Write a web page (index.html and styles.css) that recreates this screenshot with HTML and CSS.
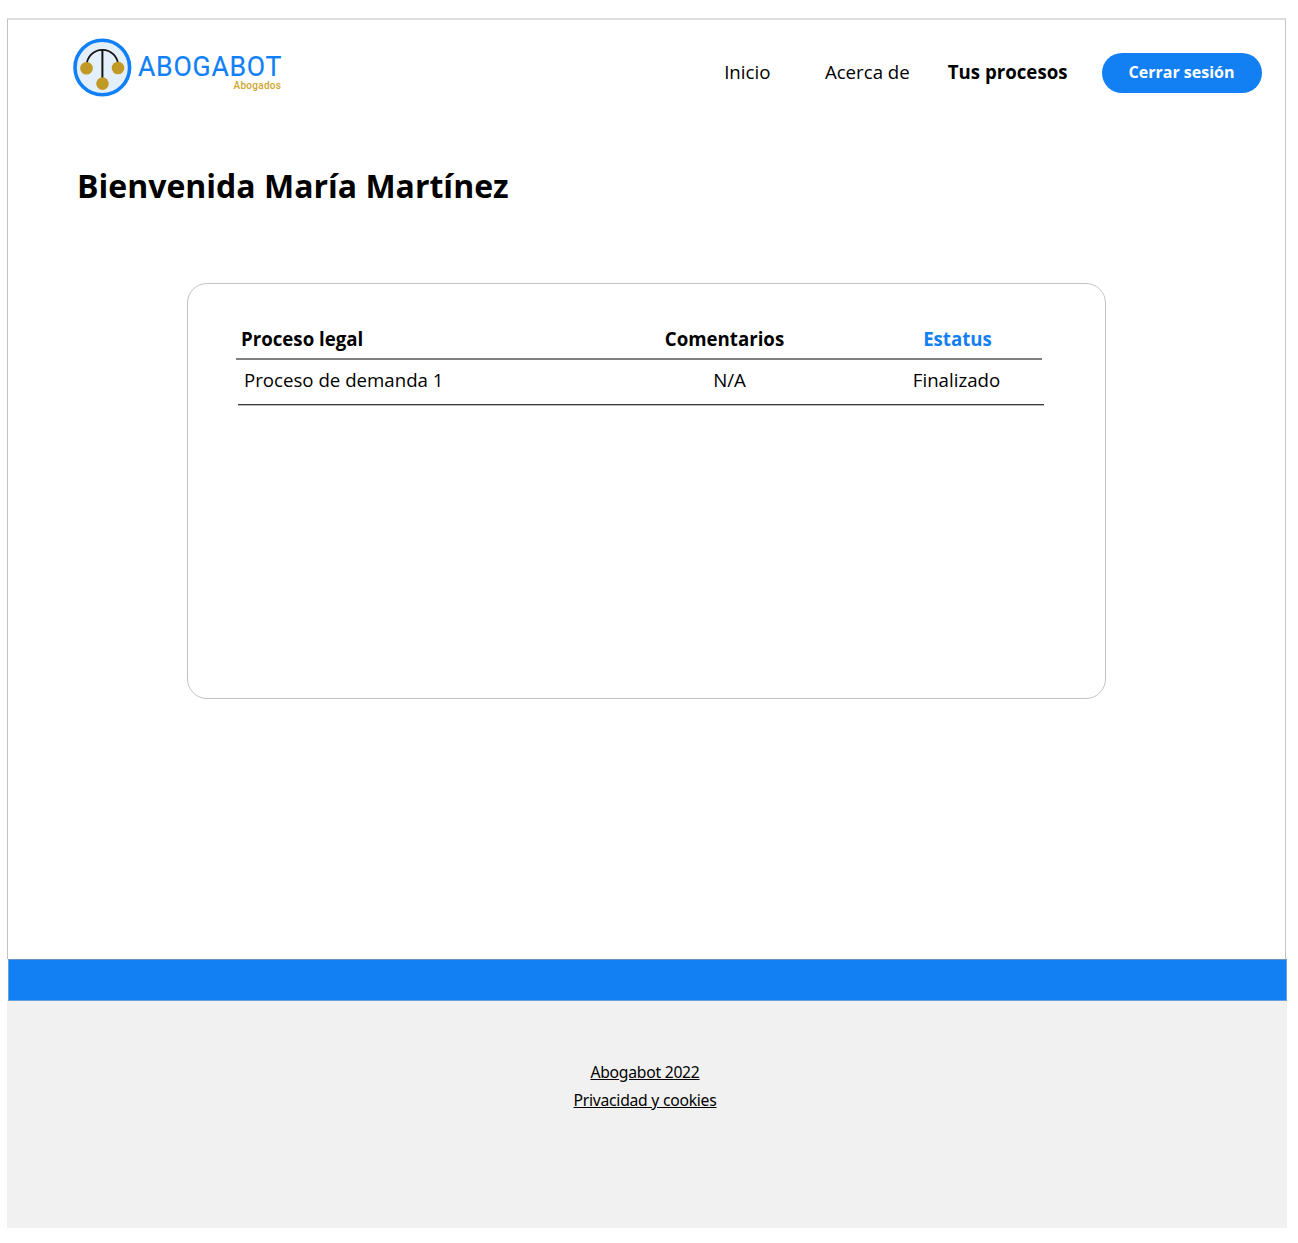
FILE: index.html
```html
<!DOCTYPE html>
<html lang="es">
<head>
<meta charset="utf-8">
<title>Abogabot</title>
<link rel="stylesheet" href="styles.css">
</head>
<body>
<div class="page">
  <header class="header">
    <svg class="logo" width="212" height="60" viewBox="0 0 212 60" role="img" aria-label="Abogabot Abogados">
      <circle cx="30.300" cy="29.5" r="27.300" fill="#e3effb" stroke="#0f80f7" stroke-width="3.6"/>
      <path d="M14.7 29.5V27.500a15.700 15.700 0 0 1 31.400 0V29.500" fill="none" stroke="#141414" stroke-width="1.800"/>
      <path d="M30.400 12V45" stroke="#141414" stroke-width="2"/>
      <g fill="#c09a24">
        <circle cx="14.500" cy="30.300" r="6.300"/>
        <circle cx="46" cy="30" r="6.300"/>
        <circle cx="30.500" cy="45.600" r="6.300"/>
      </g>
      <text class="logo-name" transform="translate(66 38) scale(.95 1)" textLength="151" lengthAdjust="spacing">ABOGABOT</text>
      <text class="logo-sub" x="161.500" y="51" textLength="47.500" lengthAdjust="spacing">Abogados</text>
    </svg>
    <nav class="nav">
      <a class="nav-link">Inicio</a>
      <a class="nav-link nav-about">Acerca de</a>
      <a class="nav-link nav-active">Tus procesos</a>
      <button class="logout">Cerrar sesión</button>
    </nav>
  </header>
  <main class="main">
    <h1 class="title">Bienvenida María Martínez</h1>
    <section class="card">
      <div class="row row-head">
        <span>Proceso legal</span><span class="center">Comentarios</span><span class="center status">Estatus</span>
      </div>
      <div class="row row-item">
        <span>Proceso de demanda 1</span><span class="center">N/A</span><span class="center">Finalizado</span>
      </div>
    </section>
  </main>
</div>
<div class="band"></div>
<footer class="footer">
  <a class="foot-link">Abogabot 2022</a>
  <a class="foot-link">Privacidad y cookies</a>
</footer>
</body>
</html>
```
FILE: styles.css
```css
* { box-sizing: border-box; }
body {
  margin: 0;
  padding: 18px 11px 0 7px;
  background: #fff;
  color: #000;
  font-family: "Open Sans", sans-serif;
  font-size: 18.67px;
}
.page {
  width: 1279px;
  height: 941px;
  border: 1px solid #c3c3c3;
  border-top: 2px solid #dedede;
  border-bottom: 0;
}
.header {
  display: flex;
  justify-content: space-between;
  padding: 18px 23.5px 0 64px;
  height: 99px;
}
.logo { display: block; }
.logo-name {
  font-family: Roboto, sans-serif;
  font-size: 28px;
  fill: #0f80f7;
  stroke: #0f80f7;
  stroke-width: 0.2px;
}
.logo-sub {
  font-family: Roboto, sans-serif;
  font-size: 10px;
  font-weight: 500;
  fill: #cda52e;
}
.nav {
  display: flex;
  align-items: center;
  height: 40px;
  margin-top: 15px;
}
.nav-link { line-height: 26px; padding-bottom: 2px; }
.nav-about { margin-left: 54.5px; }
.nav-active { margin-left: 38px; font-weight: 700; }
.logout {
  width: 160px;
  height: 40px;
  margin-left: 34px;
  padding: 0 0 2px;
  border: 0;
  border-radius: 20px;
  background: #1280f2;
  color: #fff;
  font: 700 16px "Open Sans", sans-serif;
}
.title {
  margin: 0;
  padding: 45px 0 0 69px;
  font-size: 32px;
  line-height: 44px;
}
.card {
  width: 919px;
  height: 416px;
  margin: 75px 0 0 179px;
  padding: 40px 0 0 48px;
  border: 1px solid #c3c3c3;
  border-radius: 20px;
}
.row {
  display: grid;
  width: 806px;
}
.row-head {
  grid-template-columns: 332px 303px 163px;
  height: 36px;
  padding-left: 5px;
  border-bottom: 2px solid #808080;
  font-weight: 700;
  line-height: 30px;
}
.row-item {
  grid-template-columns: 332px 307px 147px;
  height: 45px;
  margin-left: 2px;
  padding-left: 6px;
  border-bottom: 1px solid #3c3c3c;
  box-shadow: 0 1px #bcbcbc;
  line-height: 40px;
}
.center { text-align: center; }
.status { color: #1280f2; }
.band {
  width: 1279px;
  height: 42px;
  margin-left: 1px;
  border: 1px solid #6a9fd8;
  border-top-color: #6b93c2;
  background: #1280f2;
}
.footer {
  display: flex;
  flex-direction: column;
  align-items: center;
  gap: 4px;
  width: 1280px;
  height: 227px;
  padding: 59px 4px 0 0;
  background: #f1f1f1;
  font-family: "Noto Sans", sans-serif;
  font-size: 15.7px;
  letter-spacing: -0.25px;
}
.foot-link { line-height: 24px; text-decoration: underline; }
```
